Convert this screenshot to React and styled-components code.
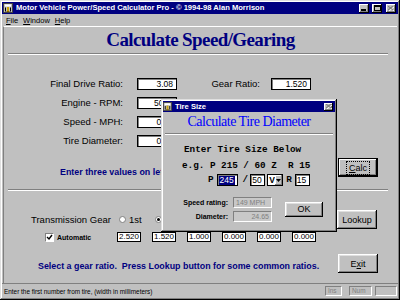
import React from "react";
import styled, { createGlobalStyle, css } from "styled-components";

const GlobalStyle = createGlobalStyle`
  html, body {
    margin: 0;
    padding: 0;
    background: #c0c0c0;
  }
  body {
    font-family: "Liberation Sans", Arial, sans-serif;
    color: #000;
  }
  #root {
    width: 400px;
    height: 300px;
    overflow: hidden;
  }
`;

const raised = css`
  box-shadow: inset -1px -1px #000, inset 1px 1px #dfdfdf,
    inset -2px -2px #808080, inset 2px 2px #fff;
`;

const Window = styled.div`
  position: relative;
  width: 400px;
  height: 300px;
  box-sizing: border-box;
  padding: 2px;
  display: flex;
  flex-direction: column;
  background: #c0c0c0;
  ${raised}
`;

const TitleBar = styled.div`
  height: 12px;
  background: #000080;
  display: flex;
  align-items: center;
  padding: 0 2px 0 1px;
  gap: 3px;
  flex-shrink: 0;
`;

const TitleText = styled.span`
  flex: 1;
  color: #fff;
  font-weight: bold;
  font-size: ${(p) => p.$size || 7.6}px;
  white-space: nowrap;
  line-height: 10px;
`;

const CaptionButton = styled.span`
  width: ${(p) => p.$w || 10}px;
  height: ${(p) => p.$h || 9}px;
  box-sizing: border-box;
  background: #c0c0c0;
  box-shadow: inset -1px -1px #000, inset 1px 1px #fff, inset -2px -2px #808080;
  display: flex;
  align-items: center;
  justify-content: center;
  margin-left: ${(p) => p.$gap || 0}px;
`;

const MenuBar = styled.div`
  height: 12px;
  display: flex;
  align-items: center;
  gap: 5px;
  padding-left: 4px;
  font-size: 7.5px;
  flex-shrink: 0;
`;

const Mnemonic = styled.span`
  text-decoration: underline;
`;

const Client = styled.div`
  flex: 1;
  margin: 0 1px;
  border-top: 1px solid #fff;
  border-left: 1px solid #808080;
  display: flex;
  flex-direction: column;
`;

const Heading = styled.h1`
  margin: 3px 0 0;
  font-family: "Liberation Serif", "Times New Roman", serif;
  font-weight: bold;
  font-size: 19px;
  letter-spacing: -0.6px;
  line-height: 20px;
  color: #000080;
  text-align: center;
`;

const Groove = styled.div`
  height: 0;
  border-top: 1px solid #808080;
  border-bottom: 1px solid #fff;
  margin: ${(p) => p.$top || 0}px ${(p) => p.$right || 9}px 0
    ${(p) => p.$left || 4}px;
`;

const FormRow = styled.div`
  display: flex;
  align-items: center;
  height: 19px;
  padding-left: 16px;
  margin-top: ${(p) => p.$top || 0}px;
`;

const FieldLabel = styled.span`
  width: ${(p) => p.$w}px;
  margin-right: ${(p) => p.$gap}px;
  text-align: right;
  font-size: 9.5px;
  white-space: nowrap;
`;

const TextBox = styled.div`
  width: 40px;
  height: 12px;
  box-sizing: border-box;
  background: #fff;
  border: 1px solid #000;
  box-shadow: inset 1px 1px #808080;
  font-size: 8.5px;
  line-height: 10px;
  text-align: right;
  padding-right: 3px;
`;

const ActionRow = styled.div`
  display: flex;
  align-items: ${(p) => p.$align || "center"};
  justify-content: space-between;
  height: 19px;
  margin-top: ${(p) => p.$top || 0}px;
  padding-left: ${(p) => p.$left}px;
  padding-right: 19px;
`;

const Hint = styled.span`
  color: #000080;
  font-weight: bold;
  font-size: 8.9px;
  line-height: 10px;
  white-space: nowrap;
  margin-top: ${(p) => p.$top || 0}px;
`;

const PushButton = styled.div`
  width: ${(p) => p.$w || 40}px;
  height: ${(p) => p.$h || 19}px;
  box-sizing: border-box;
  background: #c0c0c0;
  display: flex;
  align-items: center;
  justify-content: center;
  font-size: 9px;
  margin-left: ${(p) => (p.$push ? "auto" : `${p.$gap || 0}px`)};
  ${(p) =>
    p.$default
      ? css`
          border: 1px solid #000;
          box-shadow: inset -1px -1px #000, inset 1px 1px #fff,
            inset -2px -2px #808080;
        `
      : css`
          box-shadow: inset -1px -1px #000, inset 1px 1px #fff,
            inset -2px -2px #808080, inset 2px 2px #dfdfdf;
        `}
`;

const FocusText = styled.span`
  outline: 1px dotted #000;
  outline-offset: 1px;
  padding: 0 1px;
`;

const TransRow = styled.div`
  display: flex;
  align-items: center;
  height: 19px;
  margin-top: 19px;
  padding-left: 27px;
  padding-right: 20px;
`;

const TransLabel = styled.span`
  width: 88px;
  font-size: 9.5px;
  white-space: nowrap;
`;

const RadioItem = styled.span`
  width: 36px;
  display: flex;
  align-items: center;
  font-size: 9.5px;
`;

const Radio = styled.span`
  width: 7px;
  height: 7px;
  box-sizing: border-box;
  border-radius: 50%;
  background: #fff;
  border: 1px solid #808080;
  margin-right: 3px;
  display: flex;
  align-items: center;
  justify-content: center;
  &::after {
    content: "";
    width: 3px;
    height: 3px;
    border-radius: 50%;
    background: ${(p) => (p.$on ? "#000" : "transparent")};
  }
`;

const AutoRow = styled.div`
  display: flex;
  align-items: center;
  height: 10px;
  margin-top: 3px;
  padding-left: 41px;
`;

const CheckBox = styled.span`
  width: 9px;
  height: 9px;
  box-sizing: border-box;
  background: #fff;
  border: 1px solid #808080;
  border-right-color: #fff;
  border-bottom-color: #fff;
  margin-right: 3px;
  display: flex;
  align-items: center;
  justify-content: center;
`;

const AutoLabel = styled.span`
  width: 60px;
  font-size: 7px;
  font-weight: bold;
`;

const GearBox = styled.span`
  width: 24px;
  height: 10px;
  box-sizing: border-box;
  margin-right: 11px;
  background: #fff;
  border: 1px solid #000;
  font-size: 8px;
  line-height: 8px;
  text-align: center;
`;

const StatusBar = styled.div`
  height: 15px;
  flex-shrink: 0;
  display: flex;
  align-items: center;
  border-top: 1px solid #808080;
  box-sizing: border-box;
  padding: 0 1px 0 2px;
  font-size: 6.4px;
`;

const StatusText = styled.span`
  flex: 1;
  white-space: nowrap;
`;

const Pane = styled.span`
  width: ${(p) => p.$w}px;
  height: 10px;
  box-sizing: border-box;
  margin-left: ${(p) => p.$gap}px;
  border: 1px solid #808080;
  border-right-color: #fff;
  border-bottom-color: #fff;
  color: #808080;
  padding-left: 2px;
  line-height: 8px;
`;

/* dialog */

const Dialog = styled.div`
  position: absolute;
  left: 161px;
  top: 99px;
  width: 176px;
  height: 133px;
  box-sizing: border-box;
  padding: 2px;
  background: #c0c0c0;
  display: flex;
  flex-direction: column;
  ${raised}
`;

const DialogTitle = styled.div`
  height: 11px;
  background: #000080;
  display: flex;
  align-items: center;
  gap: 3px;
  padding: 0 2px 0 0;
`;

const DialogHeading = styled.div`
  margin-top: 3px;
  font-family: "Liberation Serif", "Times New Roman", serif;
  font-size: 14px;
  letter-spacing: -0.5px;
  line-height: 14px;
  color: #0000ff;
  text-align: center;
`;

const MonoLine = styled.div`
  font-family: "Liberation Mono", "Courier New", monospace;
  font-weight: bold;
  font-size: 9.3px;
  line-height: 10px;
  white-space: pre;
  margin-top: ${(p) => p.$top}px;
  padding-left: ${(p) => p.$left}px;
`;

const EntryRow = styled.div`
  display: flex;
  align-items: center;
  height: 12px;
  margin-top: 3px;
  padding-left: 45px;
  font-family: "Liberation Mono", "Courier New", monospace;
  font-weight: bold;
  font-size: 9.3px;
  line-height: 10px;
`;

const MonoChar = styled.span`
  margin-left: ${(p) => p.$gap || 0}px;
`;

const EntryBox = styled.span`
  width: ${(p) => p.$w}px;
  height: 12px;
  box-sizing: border-box;
  margin-left: ${(p) => p.$gap}px;
  background: #fff;
  border: 1px solid #000;
  box-shadow: inset 1px 1px #808080;
  font-family: "Liberation Sans", Arial, sans-serif;
  font-weight: normal;
  font-size: 8.5px;
  line-height: 10px;
  display: flex;
  align-items: center;
  padding-left: 1px;
`;

const Selected = styled.span`
  background: #000080;
  color: #fff;
  padding: 0 1px;
  line-height: 9px;
`;

const Combo = styled.span`
  width: 16px;
  height: 12px;
  box-sizing: border-box;
  margin-left: 2px;
  background: #fff;
  border: 1px solid #000;
  display: flex;
  font-family: "Liberation Sans", Arial, sans-serif;
  font-size: 8.5px;
  line-height: 10px;
`;

const ComboValue = styled.span`
  flex: 1;
  padding-left: 1px;
`;

const ComboArrow = styled.span`
  width: 7px;
  background: #c0c0c0;
  box-shadow: inset -1px -1px #808080, inset 1px 1px #fff;
  display: flex;
  align-items: center;
  justify-content: center;
`;

const ResultArea = styled.div`
  display: flex;
  align-items: center;
  margin-top: 10px;
`;

const ResultList = styled.div`
  display: flex;
  flex-direction: column;
  gap: 2px;
`;

const ResultRow = styled.div`
  display: flex;
  align-items: center;
  height: 12px;
`;

const ResultLabel = styled.span`
  width: 65px;
  margin-right: 5px;
  text-align: right;
  font-size: 7px;
  font-weight: bold;
  line-height: 9px;
  white-space: nowrap;
`;

const ReadOnlyBox = styled.span`
  width: 39px;
  height: 11px;
  box-sizing: border-box;
  border: 1px solid #808080;
  border-right-color: #fff;
  border-bottom-color: #fff;
  background: #c8c8c8;
  color: #808080;
  font-size: 7px;
  line-height: 9px;
  padding: 0 2px;
  text-align: ${(p) => (p.$right ? "right" : "left")};
`;

function AppIcon({ size = 10 }) {
  return (
    <svg width={size} height={size} viewBox="0 0 10 10">
      <rect x="0" y="0" width="10" height="10" fill="#c0c0c0" />
      <rect x="0.5" y="0.5" width="9" height="9" fill="none" stroke="#404040" />
      <rect x="2" y="1.5" width="6" height="2" fill="#fff" />
      <path d="M2.5 4.5v4M7.5 4.5v4" stroke="#000" strokeWidth="1" />
      <rect x="4" y="4" width="2" height="4" fill="#c8a000" />
      <rect x="3.5" y="8" width="3" height="1" fill="#806000" />
    </svg>
  );
}

function CloseGlyph({ disabled }) {
  const c = disabled ? "#808080" : "#000";
  return (
    <svg width="6" height="5" viewBox="0 0 6 5">
      {disabled && <path d="M1 1l5 4M6 1l-5 4" stroke="#fff" strokeWidth="1" />}
      <path d="M0 0l5 4M5 0l-5 4" stroke={c} strokeWidth="1.1" />
    </svg>
  );
}

function Check() {
  return (
    <svg width="7" height="7" viewBox="0 0 7 7">
      <path d="M1 3l2 2 3-4" fill="none" stroke="#000" strokeWidth="1.4" />
    </svg>
  );
}

const gears = ["1st", "2nd", "3rd", "4th", "5th", "6th"];
const ratios = ["2.520", "1.520", "1.000", "0.000", "0.000", "0.000"];

export default function App() {
  return (
    <>
      <GlobalStyle />
      <Window>
        <TitleBar>
          <AppIcon />
          <TitleText>
            Motor Vehicle Power/Speed Calculator Pro - © 1994-98 Alan Morrison
          </TitleText>
          <CaptionButton>
            <svg width="6" height="6" viewBox="0 0 6 6">
              <rect x="0" y="4" width="5" height="2" fill="#000" />
            </svg>
          </CaptionButton>
          <CaptionButton>
            <svg width="7" height="6" viewBox="0 0 7 6">
              <rect x="0.5" y="0.5" width="6" height="5" fill="none" stroke="#000" />
              <rect x="0" y="0" width="7" height="2" fill="#000" />
            </svg>
          </CaptionButton>
          <CaptionButton $gap={1}>
            <CloseGlyph disabled />
          </CaptionButton>
        </TitleBar>

        <MenuBar>
          <span>
            <Mnemonic>F</Mnemonic>ile
          </span>
          <span>
            <Mnemonic>W</Mnemonic>indow
          </span>
          <span>
            <Mnemonic>H</Mnemonic>elp
          </span>
        </MenuBar>

        <Client>
          <Heading>Calculate Speed/Gearing</Heading>
          <Groove $top={3} />

          <FormRow $top={19}>
            <FieldLabel $w={103} $gap={14}>Final Drive Ratio:</FieldLabel>
            <TextBox>3.08</TextBox>
            <FieldLabel $w={83} $gap={11}>Gear Ratio:</FieldLabel>
            <TextBox>1.520</TextBox>
          </FormRow>
          <FormRow>
            <FieldLabel $w={103} $gap={14}>Engine - RPM:</FieldLabel>
            <TextBox>5000</TextBox>
          </FormRow>
          <FormRow>
            <FieldLabel $w={103} $gap={14}>Speed - MPH:</FieldLabel>
            <TextBox>0.00</TextBox>
          </FormRow>
          <FormRow>
            <FieldLabel $w={103} $gap={14}>Tire Diameter:</FieldLabel>
            <TextBox>0.00</TextBox>
          </FormRow>

          <ActionRow $top={8} $left={56} $align="flex-end">
            <Hint>Enter three values on left, then press Calc.</Hint>
            <PushButton $default>
              <FocusText>
                <Mnemonic>C</Mnemonic>alc
              </FocusText>
            </PushButton>
          </ActionRow>

          <Groove $top={12} />

          <TransRow>
            <TransLabel>Transmission Gear</TransLabel>
            {gears.map((g, i) => (
              <RadioItem key={g}>
                <Radio $on={i === 1} />
                {g}
              </RadioItem>
            ))}
            <PushButton $push>Lookup</PushButton>
          </TransRow>

          <AutoRow>
            <CheckBox>
              <Check />
            </CheckBox>
            <AutoLabel>Automatic</AutoLabel>
            {ratios.map((r, i) => (
              <GearBox key={i}>{r}</GearBox>
            ))}
          </AutoRow>

          <ActionRow $top={12} $left={34}>
            <Hint $top={4}>
              Select a gear ratio.&nbsp; Press Lookup button for some common ratios.
            </Hint>
            <PushButton>
              E<Mnemonic>x</Mnemonic>it
            </PushButton>
          </ActionRow>
        </Client>

        <StatusBar>
          <StatusText>Enter the first number from tire, (width in millimeters)</StatusText>
          <Pane $w={17} $gap={0}>Ins</Pane>
          <Pane $w={23} $gap={7}>Num</Pane>
          <Pane $w={22} $gap={3} />
        </StatusBar>

        <Dialog>
          <DialogTitle>
            <AppIcon size={9} />
            <TitleText>Tire Size</TitleText>
            <CaptionButton $w={9} $h={8}>
              <CloseGlyph disabled />
            </CaptionButton>
          </DialogTitle>
          <DialogHeading>Calculate Tire Diameter</DialogHeading>
          <Groove $top={4} $left={2} $right={2} />
          <MonoLine $top={10} $left={21}>Enter Tire Size Below</MonoLine>
          <MonoLine $top={6} $left={19}>e.g. P 215 / 60 Z  R 15</MonoLine>
          <EntryRow>
            <MonoChar>P</MonoChar>
            <EntryBox $w={21} $gap={3}>
              <Selected>245</Selected>
            </EntryBox>
            <MonoChar $gap={5}>/</MonoChar>
            <EntryBox $w={15} $gap={2}>
              50
            </EntryBox>
            <Combo>
              <ComboValue>V</ComboValue>
              <ComboArrow>
                <svg width="5" height="3" viewBox="0 0 5 3">
                  <path d="M0 0h5L2.5 3z" fill="#000" />
                </svg>
              </ComboArrow>
            </Combo>
            <MonoChar $gap={3}>R</MonoChar>
            <EntryBox $w={15} $gap={3}>
              15
            </EntryBox>
          </EntryRow>
          <ResultArea>
            <ResultList>
              <ResultRow>
                <ResultLabel>Speed rating:</ResultLabel>
                <ReadOnlyBox>149 MPH</ReadOnlyBox>
              </ResultRow>
              <ResultRow>
                <ResultLabel>Diameter:</ResultLabel>
                <ReadOnlyBox $right>24.65</ReadOnlyBox>
              </ResultRow>
            </ResultList>
            <PushButton $w={38} $h={15} $gap={13}>
              OK
            </PushButton>
          </ResultArea>
        </Dialog>
      </Window>
    </>
  );
}
